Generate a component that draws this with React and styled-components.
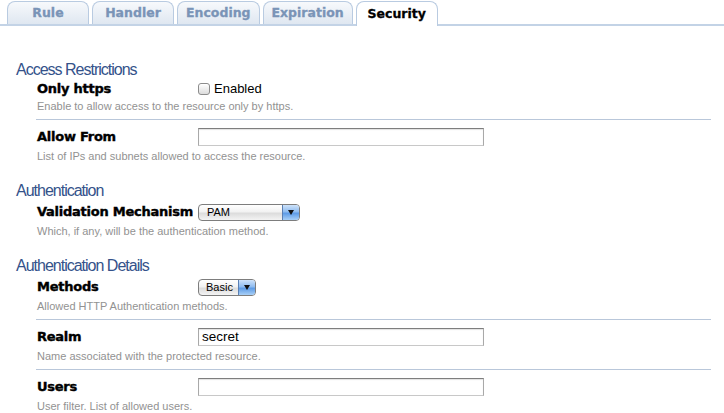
import React from 'react'
import styled, { createGlobalStyle } from 'styled-components'

const GlobalStyle = createGlobalStyle`
  html, body {
    margin: 0;
    padding: 0;
    background: #ffffff;
  }
  body {
    font-family: "Liberation Sans", Arial, sans-serif;
    color: #000;
  }
`

const Page = styled.div`
  width: 724px;
  height: 413px;
  overflow: hidden;
  background: #fff;
`

const TabBar = styled.div`
  display: flex;
  gap: 3px;
  height: 23px;
  padding: 1px 0 0 7px;
  border-bottom: 2px solid #c3d3e6;
`

const Tab = styled.div`
  box-sizing: border-box;
  min-width: 82px;
  height: ${p => (p.$active ? '25px' : '23px')};
  padding: 0 8px 1px;
  display: flex;
  align-items: center;
  justify-content: center;
  border: 1px solid #b9cbe1;
  border-bottom: none;
  border-radius: 8px 8px 0 0;
  background: ${p => (p.$active ? '#fff' : 'linear-gradient(#f7f9fc, #dfe7f1)')};
  color: ${p => (p.$active ? '#000' : '#7a94b7')};
  font-family: "DejaVu Sans", Verdana, sans-serif;
  font-weight: bold;
  font-size: 12.5px;
  -webkit-text-stroke: 0.3px currentColor;
  position: relative;
  z-index: 1;
`

const Content = styled.div`
  padding: 35px 13px 0 16px;
`

const Section = styled.section`
  & + & {
    margin-top: 13px;
  }
`

const Heading = styled.h2`
  margin: 0;
  font-family: "Liberation Sans", Arial, sans-serif;
  font-weight: normal;
  font-size: 16px;
  line-height: 18px;
  letter-spacing: -1px;
  color: #34528a;
`

const Rows = styled.div`
  margin-left: 20px;
`

const Row = styled.div`
  padding: 8px 0 6px;
  border-bottom: 1px solid #b9c7da;

  &:first-child {
    padding-top: 3px;
  }
  &:last-child {
    border-bottom: none;
  }
`

const Line = styled.div`
  display: grid;
  grid-template-columns: 162px 1fr;
  align-items: center;
  min-height: ${p => (p.$short ? '14px' : '18px')};
`

const Label = styled.div`
  font-family: "DejaVu Sans", Verdana, sans-serif;
  font-weight: bold;
  font-size: 13px;
  line-height: 14px;
  letter-spacing: -0.25px;
  padding-left: 1px;
  -webkit-text-stroke: 0.4px #000;
`

const Help = styled.div`
  margin-top: 3px;
  padding-left: 1px;
  font-size: 11px;
  line-height: 14px;
  color: #929292;
`

const CheckLabel = styled.label`
  display: flex;
  align-items: center;
  gap: 4px;
  font-size: 13px;
  line-height: 14px;
`

const CheckBox = styled.span`
  box-sizing: border-box;
  width: 12px;
  height: 12px;
  border: 1px solid #8c8c8c;
  border-radius: 3px;
  background: linear-gradient(#ffffff, #dcdcdc);
  box-shadow: inset 0 1px 0 #fff;
`

const TextInput = styled.div`
  box-sizing: border-box;
  width: 286px;
  height: 18px;
  border: 1px solid #a9a9a9;
  border-top-color: #7e7e7e;
  border-bottom-color: #c8c8c8;
  box-shadow: inset 0 1px 1px rgba(0, 0, 0, 0.12);
  padding: 0 3px;
  font-size: 13.5px;
  line-height: 16px;
`

const Select = styled.div`
  box-sizing: border-box;
  width: ${p => p.$width}px;
  height: 17px;
  display: flex;
  border: 1px solid #7d7d7d;
  border-radius: 4px;
  overflow: hidden;
  background: linear-gradient(#ffffff 0%, #f2f2f2 45%, #dcdcdc 55%, #f4f4f4 100%);
  font-size: 11px;
`

const SelectText = styled.span`
  flex: 1;
  padding-left: ${p => p.$pad}px;
  line-height: 15px;
`

const SelectArrow = styled.span`
  width: 16px;
  display: flex;
  align-items: center;
  justify-content: center;
  border-left: 1px solid #5a7fb3;
  background: linear-gradient(#cfe3fa 0%, #8fbcf0 45%, #5d9be6 55%, #a9d0f7 100%);

  &::after {
    content: '';
    border-left: 3.5px solid transparent;
    border-right: 3.5px solid transparent;
    border-top: 5px solid #111;
  }
`

const tabs = ['Rule', 'Handler', 'Encoding', 'Expiration', 'Security']

function App() {
  return (
    <Page>
      <GlobalStyle />
      <TabBar>
        {tabs.map(t => (
          <Tab key={t} $active={t === 'Security'}>{t}</Tab>
        ))}
      </TabBar>
      <Content>
        <Section>
          <Heading>Access Restrictions</Heading>
          <Rows>
            <Row>
              <Line $short>
                <Label>Only https</Label>
                <CheckLabel>
                  <CheckBox />
                  Enabled
                </CheckLabel>
              </Line>
              <Help>Enable to allow access to the resource only by https.</Help>
            </Row>
            <Row>
              <Line>
                <Label>Allow From</Label>
                <TextInput />
              </Line>
              <Help>List of IPs and subnets allowed to access the resource.</Help>
            </Row>
          </Rows>
        </Section>
        <Section>
          <Heading>Authentication</Heading>
          <Rows>
            <Row>
              <Line>
                <Label>Validation Mechanism</Label>
                <Select $width={102}>
                  <SelectText $pad={8}>PAM</SelectText>
                  <SelectArrow />
                </Select>
              </Line>
              <Help>Which, if any, will be the authentication method.</Help>
            </Row>
          </Rows>
        </Section>
        <Section>
          <Heading>Authentication Details</Heading>
          <Rows>
            <Row>
              <Line>
                <Label>Methods</Label>
                <Select $width={58}>
                  <SelectText $pad={7}>Basic</SelectText>
                  <SelectArrow />
                </Select>
              </Line>
              <Help>Allowed HTTP Authentication methods.</Help>
            </Row>
            <Row>
              <Line>
                <Label>Realm</Label>
                <TextInput>secret</TextInput>
              </Line>
              <Help>Name associated with the protected resource.</Help>
            </Row>
            <Row>
              <Line>
                <Label>Users</Label>
                <TextInput />
              </Line>
              <Help>User filter. List of allowed users.</Help>
            </Row>
          </Rows>
        </Section>
      </Content>
    </Page>
  )
}

export default App
